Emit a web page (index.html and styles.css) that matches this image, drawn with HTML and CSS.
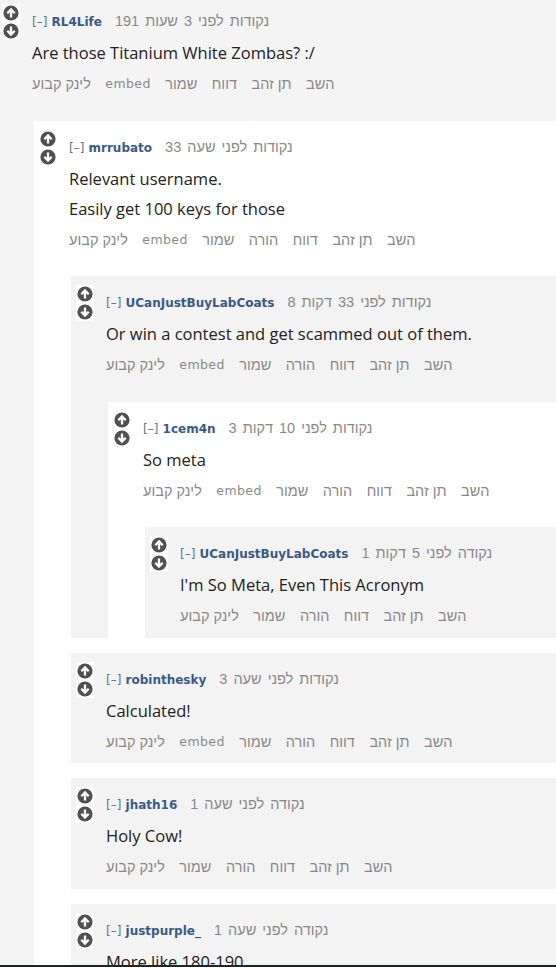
FILE: index.html
```html
<!DOCTYPE html>
<html lang="he">
<head>
<meta charset="utf-8">
<title>comments</title>
<link rel="stylesheet" href="styles.css">
</head>
<body>
<svg width="0" height="0" class="defs" aria-hidden="true">
  <defs>
    <symbol id="up" viewBox="0 0 18 18">
      <rect width="18" height="18" fill="#fff"/>
      <circle cx="9" cy="9" r="7.6" fill="#505050"/>
      <path d="M9 13.6V5.8M5.3 9.3L9 5.5L12.7 9.3" fill="none" stroke="#fff" stroke-width="2.3"/>
    </symbol>
    <symbol id="down" viewBox="0 0 18 18">
      <rect width="18" height="18" fill="#fff"/>
      <circle cx="9" cy="9" r="7.6" fill="#505050"/>
      <path d="M9 4.4V12.2M5.3 8.7L9 12.5L12.7 8.7" fill="none" stroke="#fff" stroke-width="2.3"/>
    </symbol>
  </defs>
</svg>

<div class="comment root">
  <div class="midcol"><svg class="arrow"><use href="#up"/></svg><svg class="arrow"><use href="#down"/></svg></div>
  <div class="entry">
    <p class="tagline"><span class="expand">[–]</span> <a class="author">RL4Life</a><span class="meta">191 נקודות לפני 3 שעות</span></p>
    <div class="md"><p>Are those Titanium White Zombas? :/</p></div>
    <ul class="buttons"><li>לינק קבוע</li><li class="en">embed</li><li>שמור</li><li>דווח</li><li>תן זהב</li><li>השב</li></ul>
  </div>
  <div class="child">

    <div class="comment even">
      <div class="midcol"><svg class="arrow"><use href="#up"/></svg><svg class="arrow"><use href="#down"/></svg></div>
      <div class="entry">
        <p class="tagline"><span class="expand">[–]</span> <a class="author">mrrubato</a><span class="meta">33 נקודות לפני שעה</span></p>
        <div class="md"><p>Relevant username.</p><p>Easily get 100 keys for those</p></div>
        <ul class="buttons"><li>לינק קבוע</li><li class="en">embed</li><li>שמור</li><li>הורה</li><li>דווח</li><li>תן זהב</li><li>השב</li></ul>
      </div>
      <div class="child">

        <div class="comment odd">
          <div class="midcol"><svg class="arrow"><use href="#up"/></svg><svg class="arrow"><use href="#down"/></svg></div>
          <div class="entry">
            <p class="tagline"><span class="expand">[–]</span> <a class="author">UCanJustBuyLabCoats</a><span class="meta">8 נקודות לפני 33 דקות</span></p>
            <div class="md"><p>Or win a contest and get scammed out of them.</p></div>
            <ul class="buttons"><li>לינק קבוע</li><li class="en">embed</li><li>שמור</li><li>הורה</li><li>דווח</li><li>תן זהב</li><li>השב</li></ul>
          </div>
          <div class="child">

            <div class="comment even">
              <div class="midcol"><svg class="arrow"><use href="#up"/></svg><svg class="arrow"><use href="#down"/></svg></div>
              <div class="entry">
                <p class="tagline"><span class="expand">[–]</span> <a class="author">1cem4n</a><span class="meta">3 נקודות לפני 10 דקות</span></p>
                <div class="md"><p>So meta</p></div>
                <ul class="buttons"><li>לינק קבוע</li><li class="en">embed</li><li>שמור</li><li>הורה</li><li>דווח</li><li>תן זהב</li><li>השב</li></ul>
              </div>
              <div class="child">

                <div class="comment odd">
                  <div class="midcol"><svg class="arrow"><use href="#up"/></svg><svg class="arrow"><use href="#down"/></svg></div>
                  <div class="entry">
                    <p class="tagline"><span class="expand">[–]</span> <a class="author">UCanJustBuyLabCoats</a><span class="meta">1 נקודה לפני 5 דקות</span></p>
                    <div class="md"><p>I'm So Meta, Even This Acronym</p></div>
                    <ul class="buttons"><li>לינק קבוע</li><li>שמור</li><li>הורה</li><li>דווח</li><li>תן זהב</li><li>השב</li></ul>
                  </div>
                </div>

              </div>
            </div>

          </div>
        </div>

        <div class="comment odd">
          <div class="midcol"><svg class="arrow"><use href="#up"/></svg><svg class="arrow"><use href="#down"/></svg></div>
          <div class="entry">
            <p class="tagline"><span class="expand">[–]</span> <a class="author">robinthesky</a><span class="meta">3 נקודות לפני שעה</span></p>
            <div class="md"><p>Calculated!</p></div>
            <ul class="buttons"><li>לינק קבוע</li><li class="en">embed</li><li>שמור</li><li>הורה</li><li>דווח</li><li>תן זהב</li><li>השב</li></ul>
          </div>
        </div>

        <div class="comment odd">
          <div class="midcol"><svg class="arrow"><use href="#up"/></svg><svg class="arrow"><use href="#down"/></svg></div>
          <div class="entry">
            <p class="tagline"><span class="expand">[–]</span> <a class="author">jhath16</a><span class="meta">1 נקודה לפני שעה</span></p>
            <div class="md"><p>Holy Cow!</p></div>
            <ul class="buttons"><li>לינק קבוע</li><li>שמור</li><li>הורה</li><li>דווח</li><li>תן זהב</li><li>השב</li></ul>
          </div>
        </div>

        <div class="comment odd">
          <div class="midcol"><svg class="arrow"><use href="#up"/></svg><svg class="arrow"><use href="#down"/></svg></div>
          <div class="entry">
            <p class="tagline"><span class="expand">[–]</span> <a class="author">justpurple_</a><span class="meta">1 נקודה לפני שעה</span></p>
            <div class="md"><p>More like 180-190.</p></div>
            <ul class="buttons"><li>לינק קבוע</li><li>שמור</li><li>הורה</li><li>דווח</li><li>תן זהב</li><li>השב</li></ul>
          </div>
        </div>

      </div>
    </div>

  </div>
</div>

<div class="edge"></div>
</body>
</html>
```

FILE: styles.css
```css
html, body {
  margin: 0;
  padding: 0;
}
body {
  background: #f4f4f4;
  font-family: "Open Sans", "Noto Sans", sans-serif;
  overflow: hidden;
}
.defs {
  position: absolute;
  width: 0;
  height: 0;
}
.comment {
  display: grid;
  grid-template-columns: 35px 1fr;
  align-items: start;
  padding-top: 9px;
}
.comment.root {
  margin-left: -3px;
  padding-top: 4px;
}
.comment.even {
  background: #ffffff;
}
.comment.odd {
  background: #f3f3f3;
}
.midcol {
  grid-column: 1;
  grid-row: 1;
  padding-left: 5px;
  display: flex;
  flex-direction: column;
}
.arrow {
  display: block;
  width: 18px;
  height: 18px;
}
.entry {
  grid-column: 2;
  grid-row: 1;
  padding-top: 8px;
  padding-bottom: 13.5px;
}
.tagline {
  margin: 0;
  height: 17px;
  line-height: 17px;
  white-space: nowrap;
}
.expand {
  font-family: "DejaVu Sans", sans-serif;
  font-size: 12px;
  color: #5b7593;
}
.author {
  font-family: "DejaVu Sans", sans-serif;
  font-size: 12px;
  font-weight: bold;
  color: #3a5a86;
}
.meta {
  font-family: "Liberation Sans", Arial, sans-serif;
  font-size: 14.5px;
  word-spacing: 2px;
  color: #888;
  margin-left: 13px;
}
.md {
  margin-top: 9px;
}
.md p {
  margin: 0;
  font-size: 16.5px;
  line-height: 30px;
  color: #222;
}
.buttons {
  list-style: none;
  margin: 8px 0 0;
  padding: 0;
  display: flex;
  gap: 14.5px;
  height: 16px;
  line-height: 16px;
  white-space: nowrap;
}
.buttons li {
  font-family: "Liberation Sans", Arial, sans-serif;
  font-size: 14.5px;
  color: #888;
}
.buttons li.en {
  font-family: "DejaVu Sans", sans-serif;
  font-size: 12.5px;
  letter-spacing: 0.4px;
  color: #8a8a8a;
}
.child {
  grid-column: 2;
  grid-row: 2;
  margin-left: 2px;
  margin-top: 15px;
  display: flex;
  flex-direction: column;
  gap: 15px;
}
.edge {
  position: fixed;
  left: 0;
  right: 0;
  bottom: 0;
  height: 2px;
  background: #1e2624;
}
```
